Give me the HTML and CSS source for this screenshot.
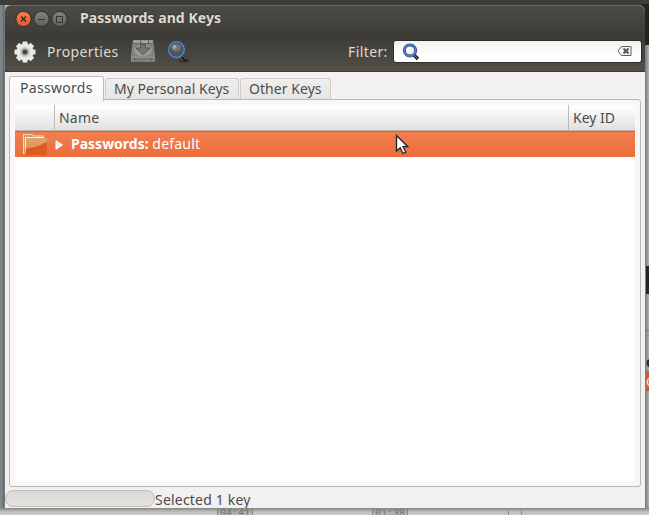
FILE: index.html
```
<!DOCTYPE html>
<html lang="en">
<head>
<meta charset="utf-8">
<title>Passwords and Keys</title>
<link rel="stylesheet" href="styles.css">
</head>
<body>
<div class="desktop">
  <div class="behind behind-left"></div>
  <div class="behind behind-right"></div>
  <div class="behind dark-top"></div>
  <div class="behind dark-mid"></div>
  <div class="behind rule-right"></div>
  <div class="behind letter">o</div>
  <div class="behind selected-behind">o</div>
  <div class="behind bottom-track"></div>
  <div class="behind time time-a">04:41</div>
  <div class="behind time time-b">01:38</div>
  <div class="behind bottom-end"></div>

  <main class="window">
    <header class="titlebar">
      <svg class="controls" width="54" height="18" viewBox="0 0 54 18">
        <defs>
          <linearGradient id="close" x2="0" y2="1"><stop stop-color="#f58358"/><stop offset="1" stop-color="#e55522"/></linearGradient>
          <linearGradient id="btn" x2="0" y2="1"><stop stop-color="#85837c"/><stop offset="1" stop-color="#605e58"/></linearGradient>
        </defs>
        <circle cx="8.500" cy="9" r="7.600" fill="url(#close)" stroke="#33312d" stroke-width="1"/>
        <path d="M6 6.500l5 5M11 6.500l-5 5" stroke="#39251d" stroke-width="1.400"/>
        <circle cx="26.500" cy="9" r="7.600" fill="url(#btn)" stroke="#33312d" stroke-width="1"/>
        <path d="M23 9.500h7" stroke="#393833"/>
        <circle cx="44.500" cy="9" r="7.600" fill="url(#btn)" stroke="#33312d" stroke-width="1"/>
        <rect x="41.500" y="6.500" width="6" height="6" fill="none" stroke="#393833"/>
      </svg>
      <h1 class="title">Passwords and Keys</h1>
    </header>

    <div class="toolbar">
      <svg class="gear" width="24" height="24" viewBox="0 0 24 24">
        <g fill="#e9e9e7">
          <rect x="9.500" y="1.500" width="5" height="21" rx=".8"/>
          <rect x="9.500" y="1.500" width="5" height="21" rx=".8" transform="rotate(45 12 12)"/>
          <rect x="9.500" y="1.500" width="5" height="21" rx=".8" transform="rotate(90 12 12)"/>
          <rect x="9.500" y="1.500" width="5" height="21" rx=".8" transform="rotate(135 12 12)"/>
          <circle cx="12" cy="12" r="8.600"/>
        </g>
        <circle cx="12" cy="12" r="5.200" fill="#d0d0cd"/>
        <circle cx="12" cy="12" r="3.500" fill="#989894"/>
        <circle cx="12" cy="12" r="2.300" fill="#45443f"/>
      </svg>
      <span class="properties">Properties</span>
      <svg class="import" width="26" height="24" viewBox="0 0 26 24">
        <path d="M3 1h20l2 16v5.500H1V17z" fill="#8b8a85"/>
        <path d="M3.500 1.500h19v2.500h-19z" fill="#a3a29d"/>
        <path d="M4 5h18l2 12H2z" fill="#82817c"/>
        <ellipse cx="13" cy="11.500" rx="9" ry="6" fill="#999892"/>
        <path d="M10.500 5.500h5v3.500H20L13 15.500 6 9h4.500z" fill="#77766f" stroke="#55544e"/>
        <path d="M1.500 18.500h23v3.500h-23z" fill="#777670" stroke="#8e8d88"/>
        <path d="M4 20.500h2M20 20.500h2" stroke="#55544e"/><path d="M3 4.500h20" stroke="#6a6963"/><path d="M10.500 1.500v3M18.500 1.500v3" stroke="#55544f"/>
      </svg>
      <svg class="search" width="24" height="24" viewBox="0 0 24 24">
        <ellipse cx="18" cy="21" rx="5" ry="1.500" fill="#35342f"/>
        <path d="M15 15l6 5.500" stroke="#1c1c1c" stroke-width="3.500"/>
        <path d="M16 15l5 4.700" stroke="#858585" stroke-width="1"/>
        <circle cx="10.500" cy="9.700" r="7.700" fill="#55544f" stroke="#2c4d86" stroke-width="2.600"/>
        <circle cx="10.500" cy="9.700" r="7.800" fill="none" stroke="#6288c4" stroke-width="1.300"/>
        <ellipse cx="10" cy="7.500" rx="5" ry="4" fill="#74736d"/>
        <circle cx="8.500" cy="7" r="2" fill="#aaa9a4"/>
      </svg>
      <span class="filter-label">Filter:</span>
      <div class="filter">
        <svg width="18" height="18" viewBox="0 0 18 18">
          <path d="M11.500 11.500l4.500 4.500" stroke="#292929" stroke-width="3.500"/>
          <path d="M12 12l3 3" stroke="#777"/>
          <circle cx="8" cy="7.500" r="5.600" fill="#e9eef5" stroke="#294d88" stroke-width="3"/>
          <circle cx="8" cy="7.500" r="5.600" fill="none" stroke="#5f84c0" stroke-width="1.400"/>
          <circle cx="7" cy="6.500" r="2.200" fill="#fff"/>
        </svg>
        <svg width="15" height="11" viewBox="0 0 15 11">
          <path d="M4.500.5h9.500v9H4.500L1 5z" fill="#fafafa" stroke="#5c5c5c"/>
          <path d="M6.500 2.500l5 5M11.500 2.500l-5 5" stroke="#555" stroke-width="2"/>
        </svg>
      </div>
    </div>

    <nav class="tabs">
      <span class="tab active">Passwords</span>
      <span class="tab personal">My Personal Keys</span>
      <span class="tab other">Other Keys</span>
    </nav>
    <section class="panel">
      <div class="list">
        <div class="columns"><span></span><span class="name">Name</span><span class="keyid">Key ID</span></div>
        <div class="row">
          <svg class="folder" width="26" height="23" viewBox="0 0 26 23">
            <defs><linearGradient id="folder" x2="0" y2="1"><stop stop-color="#dba766"/><stop offset=".5" stop-color="#e59560"/><stop offset="1" stop-color="#e2662f"/></linearGradient></defs>
            <path d="M.5 20.500V1.500h9l1 1.500h10V20.500z" fill="#d9946c" stroke="#eadbd0"/>
            <path d="M2.500 20V4.500h18" fill="none" stroke="#fff0e4"/>
            <path d="M4 5h20v17H2z" fill="url(#folder)"/>
            <path d="M4 15c8 0 13-3 20-6v13H2z" fill="#dc5b23"/>
          </svg>
          <svg class="expander" width="9" height="10" viewBox="0 0 9 10"><path d="M1 .8v8.400L7.500 5z" fill="#eee" stroke="#fff"/></svg>
          <span class="rowtext"><b>Passwords:</b> <span class="default">default</span></span>
        </div>
      </div>
    </section>
    <footer class="status"><div class="progress"></div><span class="status-text">Selected 1 key</span></footer>
  </main>

  <svg class="pointer" width="15" height="22" viewBox="0 0 15 22"><path d="M1.500 1.500v15.500l3.700-3.300 2.700 5.800 2.900-1.300-2.700-5.500h4.700z" fill="#fff" stroke="#222" stroke-width="1.300"/></svg>
</div>
</body>
</html>
```
FILE: styles.css
```
* { box-sizing: border-box; }
body { margin: 0; font: 14px/20px "Noto Sans", "Open Sans", sans-serif; color: #4c4c4c; }
.desktop { position: relative; width: 649px; height: 515px; overflow: hidden; background: linear-gradient(#3e3d38 0 5px, #b7b7b6 5px); padding: 5px 4px 7px 5px; }
.behind { position: absolute; }
.behind-left { left: 0; top: 5px; width: 5px; height: 510px; background: linear-gradient(90deg, #7c8587 0 2px, #5f6668 4px, #8b8b89); }
.behind-right { left: 645px; top: 45px; width: 4px; height: 470px; background: linear-gradient(90deg, #777, #b0b0b0); }
.dark-top { left: 640px; top: 4px; width: 9px; height: 41px; background: #242320; }
.dark-mid { left: 646px; top: 266px; width: 3px; height: 28px; background: #252525; }
.rule-right { left: 646px; top: 330px; width: 3px; height: 1px; background: #777; }
.letter { left: 646px; top: 352px; width: 3px; color: #222; font-weight: bold; overflow: hidden; }
.selected-behind { left: 646px; top: 371px; width: 3px; height: 20px; color: #eee; background: #be6238; overflow: hidden; }
.bottom-track { left: 0; top: 508px; width: 649px; height: 7px; background: linear-gradient(#828280, #b6b6b4 3px, #d0d0cf); }
.time { top: 508px; width: 36px; height: 7px; overflow: hidden; border: solid #858583; border-width: 0 1px; font: 10px/12px "Liberation Mono", monospace; color: #6f7477; background: linear-gradient(#898986, #bfbfbc); padding-left: 2px; }
.time-a { left: 217px; }
.time-b { left: 372px; }
.bottom-end { left: 508px; top: 509px; width: 14px; height: 6px; border: solid #8c8c89; border-width: 0 1px; }
.window { position: relative; display: flex; flex-direction: column; width: 640px; height: 503px; background: #f2f0f0; border-radius: 6px 6px 0 0; overflow: hidden; }
.titlebar { height: 28px; flex: none; display: flex; align-items: center; padding: 0 10px; gap: 11px; background: linear-gradient(#4c4b45, #3e3d38); border-top: 1px solid #66655e; }
.controls { margin-bottom: 1px; }
.title { margin: 0 0 4px; color: #dfdbd2; font-size: 14px; line-height: 20px; font-weight: bold; letter-spacing: .08px; white-space: nowrap; text-shadow: 0 -1px #33322e; }
.toolbar { height: 39px; flex: none; display: flex; align-items: center; padding: 0 3px 1px 8px; background: linear-gradient(#3b3a36, #514f46); border-bottom: 1px solid #3d3b34; color: #dfdbd2; }
.properties { width: 71px; margin-left: 10px; white-space: nowrap; letter-spacing: .36px; }
.import { margin-left: 12px; margin-bottom: 1px; }
.search { margin-left: 10px; }
.filter-label { margin-left: auto; width: 40px; white-space: nowrap; letter-spacing: .4px; }
.filter { width: 249px; height: 23px; margin-left: 5px; padding: 0 9px 0 8px; display: flex; align-items: center; justify-content: space-between; background: linear-gradient(#f1f1f1, #fff 70%); border: 1px solid #2f2e2a; border-radius: 3px; }
.tabs { flex: none; height: 28px; padding: 4px 4px 0; display: flex; align-items: flex-end; }
.tab { height: 22px; border: 1px solid #ceccc9; border-bottom: 0; border-radius: 3px 3px 0 0; background: linear-gradient(#efeeed, #e6e5e4); padding: 0 8px; white-space: nowrap; }
.active { position: relative; z-index: 1; width: 95px; height: 25px; margin-bottom: -1px; padding: 1px 10px; background: linear-gradient(#fff, #f7f5f6); border-color: #bebcb8; letter-spacing: .3px; }
.personal { width: 134px; margin-left: 1px; letter-spacing: .04px; }
.other { width: 91px; margin-left: 1px; letter-spacing: .05px; }
.panel { flex: none; height: 388px; margin: -1px 4px 0; border: 1px solid #b9b7b2; border-radius: 0 3px 3px 3px; padding: 5px; background: #f8f6f7; }
.list { height: 376px; background: #fff; }
.columns { display: grid; grid-template-columns: 40px 514px 66px; height: 26px; line-height: 25px; background: linear-gradient(#fff, #e2e1df); border-bottom: 1px solid #c6b5aa; }
.columns span + span { border-left: 1px solid #bdbbb7; margin-left: -1px; padding-left: 4px; }
.name { letter-spacing: .2px; }
.row { height: 26px; display: flex; align-items: center; background: linear-gradient(#f37e4e, #e96d3b); border-top: 1px solid #d9622f; color: #fff; }
.folder { margin-left: 8px; }
.expander { margin-left: 6px; }
.rowtext { margin: 0 0 2px 7px; white-space: nowrap; }
.default { letter-spacing: .22px; }
.status { flex: 1; display: flex; align-items: center; line-height: 17px; }
.status-text { margin-top: 4px; letter-spacing: .2px; }
.progress { width: 150px; height: 17px; margin-top: 2px; border: 1px solid #c0beb9; border-radius: 8px; background: linear-gradient(#dbdad8, #e3e2e0); }
.pointer { position: absolute; left: 395px; top: 134px; }
```
